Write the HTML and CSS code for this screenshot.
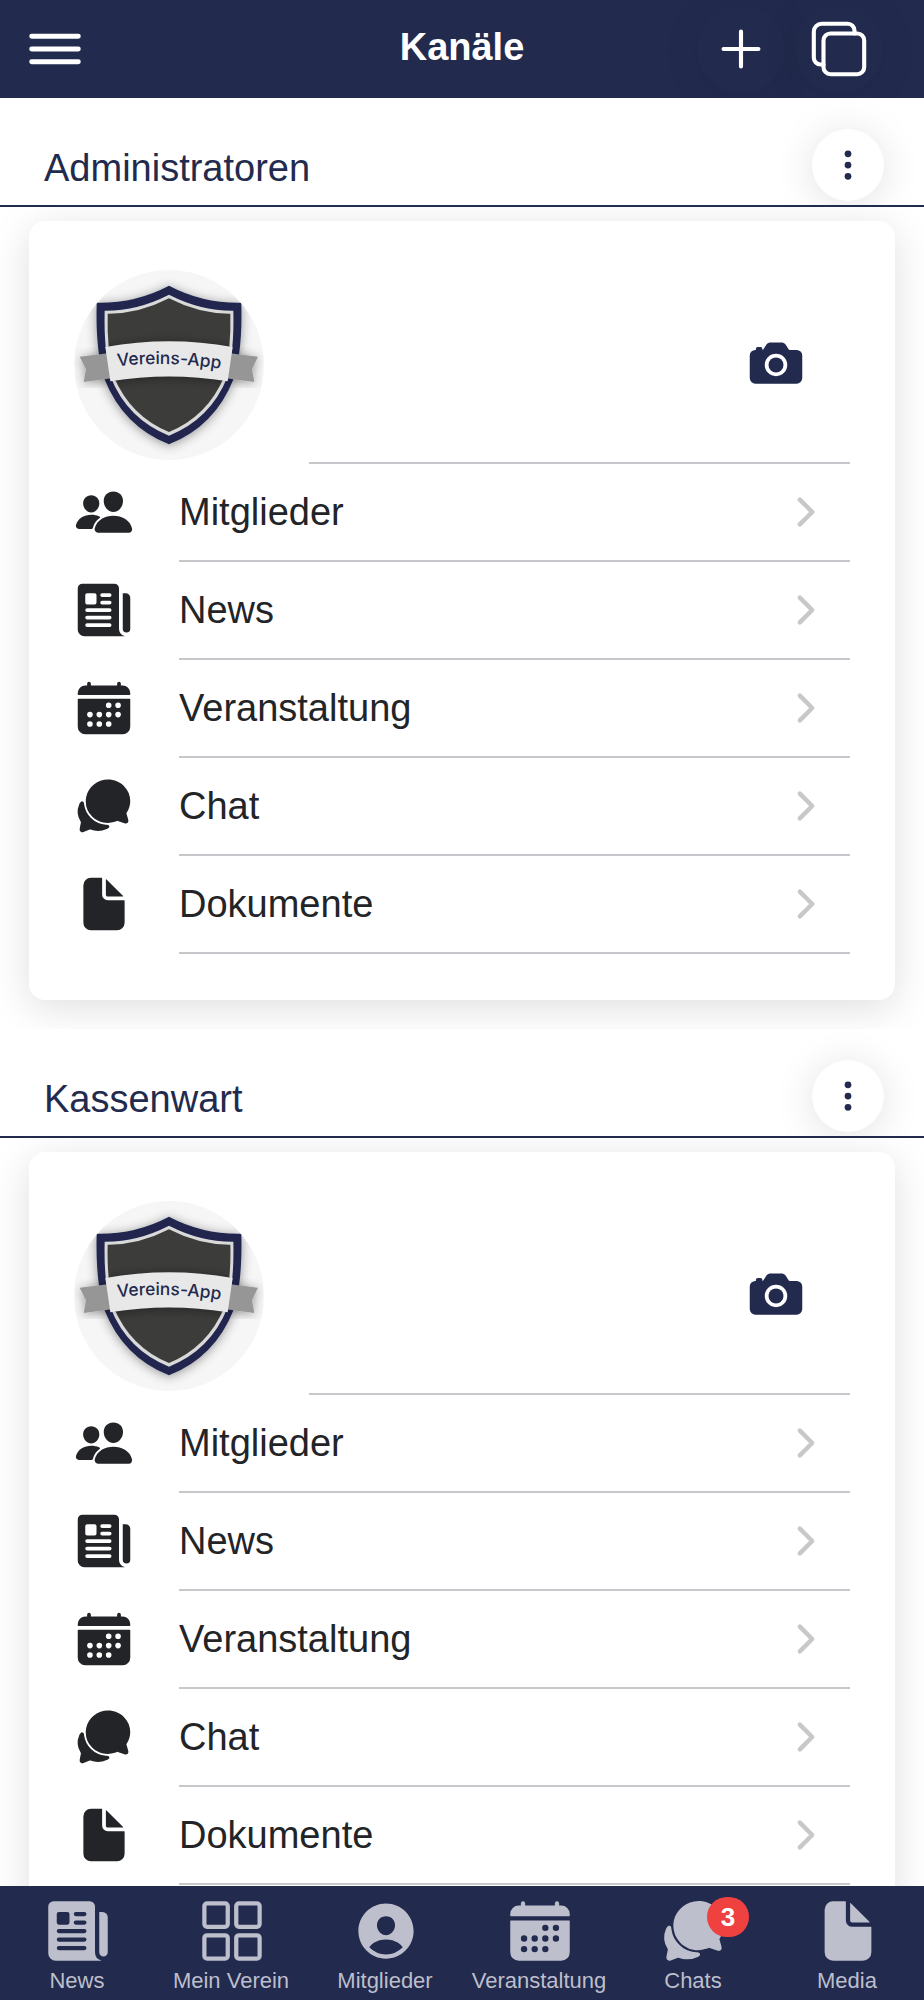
FILE: index.html
```html
<!DOCTYPE html>
<html lang="de">
<head>
  <meta charset="UTF-8" />
  <meta name="viewport" content="width=device-width, initial-scale=1.0"/>
  <title>Kanäle</title>
  <link rel="stylesheet" href="styles.css">
</head>
<body>
  <svg class="sprite" aria-hidden="true">
    <symbol id="i-people" viewBox="0 0 512 512">
      <path d="M336 256c-20.56 0-40.44-9.18-56-25.84-15.13-16.25-24.37-37.92-26-61-1.74-24.62 5.77-47.26 21.14-63.76S312 80 336 80c23.83 0 45.38 9.06 60.7 25.52 15.47 16.62 23 39.22 21.26 63.63-1.67 23.11-10.9 44.77-26 61C376.44 246.82 356.57 256 336 256zM467.83 432H204.18a27.71 27.71 0 01-22-10.67 30.22 30.22 0 01-5.26-25.79c8.42-33.81 29.28-61.85 60.32-81.08C264.79 297.4 299.86 288 336 288c36.85 0 71 9 98.71 26.05 31.11 19.13 52 47.33 60.38 81.55a30.27 30.27 0 01-5.32 25.78A27.68 27.68 0 01467.83 432zM147 260c-35.19 0-66.13-32.72-69-72.93-1.42-20.6 5-39.65 18-53.62 12.86-13.83 31-21.45 51-21.45s38 7.66 50.93 21.57c13.1 14.08 19.5 33.09 18 53.52-2.87 40.2-33.8 72.91-68.93 72.91zM212.66 291.45c-17.59-8.6-40.42-12.9-65.65-12.9-29.46 0-58.07 7.68-80.57 21.62-25.51 15.83-42.67 38.88-49.6 66.71a27.39 27.39 0 004.79 23.36A25.32 25.32 0 0041.72 400h111a8 8 0 007.87-6.57c.11-.63.25-1.26.41-1.88 8.48-34.06 28.35-62.84 57.71-83.82a8 8 0 00-.63-13.39c-1.57-.92-3.37-1.89-5.42-2.89z"/>
    </symbol>
    <symbol id="i-news" viewBox="0 0 512 512">
      <path d="M439.91 112h-23.82a.09.09 0 00-.09.09V416a32 32 0 0032 32 32 32 0 0032-32V152.09A40.09 40.09 0 00439.91 112z"/>
      <path fill-rule="evenodd" d="M384 416V72a40 40 0 00-40-40H72a40 40 0 00-40 40v352a56 56 0 0056 56h342.85a1.14 1.14 0 00.3-2.25A64.11 64.11 0 01384 416zM96 128a16 16 0 0116-16h64a16 16 0 0116 16v64a16 16 0 01-16 16h-64a16 16 0 01-16-16zM304 400H112a16 16 0 010-32h192a16 16 0 010 32zM304 336H112a16 16 0 010-32h192a16 16 0 010 32zM304 272H112a16 16 0 010-32h192a16 16 0 010 32zM304 208h-64a16 16 0 010-32h64a16 16 0 010 32zM304 144h-64a16 16 0 010-32h64a16 16 0 010 32z"/>
    </symbol>
    <symbol id="i-calendar" viewBox="0 0 512 512">
      <path d="M480 128a64 64 0 00-64-64h-16V48a16 16 0 00-32 0v16H144V48a16 16 0 00-32 0v16H96a64 64 0 00-64 64v12a4 4 0 004 4h440a4 4 0 004-4z"/>
      <path fill-rule="evenodd" d="M32 416a64 64 0 0064 64h320a64 64 0 0064-64V179a3 3 0 00-3-3H35a3 3 0 00-3 3zm344-208a24 24 0 11-24 24 24 24 0 0124-24zm0 80a24 24 0 11-24 24 24 24 0 0124-24zm-80-80a24 24 0 11-24 24 24 24 0 0124-24zm0 80a24 24 0 11-24 24 24 24 0 0124-24zm0 80a24 24 0 11-24 24 24 24 0 0124-24zm-80-80a24 24 0 11-24 24 24 24 0 0124-24zm0 80a24 24 0 11-24 24 24 24 0 0124-24zm-80-80a24 24 0 11-24 24 24 24 0 0124-24zm0 80a24 24 0 11-24 24 24 24 0 0124-24z"/>
    </symbol>
    <symbol id="i-chat" viewBox="0 0 512 512">
      <path d="M439.9 405.6a26.77 26.77 0 01-9.59-2l-56.78-20.13-.42-.17a9.88 9.88 0 00-3.91-.76 10.32 10.32 0 00-3.62.66c-1.38.52-13.81 5.19-26.85 8.77-7.07 1.94-31.68 8.27-51.43 8.27-50.48 0-97.68-19.4-132.89-54.63A183.38 183.38 0 01100.3 215.1a175.9 175.9 0 014.06-37.58c8.79-40.62 32.07-77.57 65.55-104A194.76 194.76 0 01290.3 30.5c52.21 0 100.86 20 137 56.18 34.16 34.27 52.88 79.33 52.73 126.87a177.86 177.86 0 01-30.3 99.15l-.19.28-.74 1c-.17.23-.34.45-.5.68l-.15.27a21.63 21.63 0 00-1.08 2.09l15.74 55.94a26.42 26.42 0 011.12 7.11 24 24 0 01-24.03 25.53z"/>
      <path d="M299.87 425.39a15.74 15.74 0 00-10.29-8.1c-5.78-1.53-12.52-1.27-17.67-1.65a201.78 201.78 0 01-128.82-58.75A199.21 199.21 0 0186.4 244.16C85 234.42 85 232 85 232a16 16 0 00-28-10.58s-7.88 8.58-11.6 17.19a162.09 162.09 0 0011 150.06C59 393 59 395 58.42 399.5c-2.73 14.11-7.51 39-10 51.91a24 24 0 008 22.92l.46.39A24.34 24.34 0 0072 480a23.42 23.42 0 009-1.79l53.51-20.65a8.05 8.05 0 015.72 0c21.07 7.84 43 12 63.78 12a176 176 0 0074.91-16.66c5.46-2.56 14-5.34 19-11.12a15 15 0 001.95-16.39z"/>
    </symbol>
    <symbol id="i-document" viewBox="0 0 512 512">
      <path d="M428 224H288a48 48 0 01-48-48V36a4 4 0 00-4-4h-92a64 64 0 00-64 64v320a64 64 0 0064 64h224a64 64 0 0064-64V228a4 4 0 00-4-4z"/>
      <path d="M419.22 188.59L275.41 44.78a2 2 0 00-3.41 1.41V176a16 16 0 0016 16h129.81a2 2 0 001.41-3.41z"/>
    </symbol>
    <symbol id="i-camera" viewBox="0 0 512 512">
      <circle cx="256" cy="272" r="64"/>
      <path fill-rule="evenodd" d="M432 144h-59c-3 0-6.72-1.94-9.62-5l-25.94-40.94a15.52 15.52 0 00-1.37-1.85C327.11 85.76 315 80 302 80h-92c-13 0-25.11 5.76-34.07 16.21a15.52 15.52 0 00-1.37 1.85l-25.94 41c-2.22 2.42-5.34 5-8.62 5v-8a16 16 0 00-16-16h-24a16 16 0 00-16 16v8h-4a48.05 48.05 0 00-48 48V384a48.05 48.05 0 0048 48h352a48.05 48.05 0 0048-48V192a48.05 48.05 0 00-48-48zM256 368a96 96 0 1196-96 96.11 96.11 0 01-96 96z"/>
    </symbol>
    <symbol id="i-person" viewBox="0 0 512 512">
      <path fill-rule="evenodd" d="M256 48C141.13 48 48 141.13 48 256s93.13 208 208 208 208-93.13 208-208S370.87 48 256 48zm-50.22 116.82C218.45 151.39 236.28 144 256 144s37.39 7.44 50.11 20.94c12.89 13.68 19.16 32.06 17.68 51.82C320.83 256 290.43 288 256 288s-64.89-32-67.79-71.25c-1.47-19.92 4.79-38.36 17.57-51.93zM256 432a175.49 175.49 0 01-126-53.22 122.91 122.91 0 0135.14-33.44C190.63 329 222.89 320 256 320s65.37 9 90.83 25.34A122.87 122.87 0 01382 378.78 175.45 175.45 0 01256 432z"/>
    </symbol>
    <symbol id="i-grid" viewBox="0 0 512 512">
      <g fill="none" stroke="currentColor" stroke-width="32">
        <rect x="48" y="48" width="176" height="176" rx="20"/>
        <rect x="288" y="48" width="176" height="176" rx="20"/>
        <rect x="48" y="288" width="176" height="176" rx="20"/>
        <rect x="288" y="288" width="176" height="176" rx="20"/>
      </g>
    </symbol>
    <symbol id="i-menu" viewBox="0 0 512 512">
      <path fill="none" stroke="currentColor" stroke-width="36" stroke-linecap="round" d="M80 160h352M80 256h352M80 352h352"/>
    </symbol>
    <symbol id="i-add" viewBox="0 0 512 512">
      <path fill="none" stroke="currentColor" stroke-width="34" stroke-linecap="round" d="M256 112v288M400 256H112"/>
    </symbol>
    <symbol id="i-copy" viewBox="0 0 512 512">
      <g fill="none" stroke="currentColor" stroke-width="34" stroke-linejoin="round">
        <rect x="128" y="128" width="336" height="336" rx="57"/>
        <path stroke-linecap="round" d="M383.5 128l.5-24a56.16 56.16 0 00-56-56H112a64.19 64.19 0 00-64 64v216a56.16 56.16 0 0056 56h24"/>
      </g>
    </symbol>
    <symbol id="i-dots" viewBox="0 0 512 512">
      <circle cx="256" cy="96" r="48"/>
      <circle cx="256" cy="256" r="48"/>
      <circle cx="256" cy="416" r="48"/>
    </symbol>
    <symbol id="i-chevron" viewBox="0 0 512 512">
      <path fill="none" stroke="currentColor" stroke-width="52" stroke-linecap="round" stroke-linejoin="round" d="M184 112l144 144-144 144"/>
    </symbol>
    <filter id="soft" x="-20%" y="-20%" width="140%" height="140%">
      <feDropShadow dx="0" dy="4" stdDeviation="16" flood-color="#000" flood-opacity="0.4"/>
    </filter>
    <clipPath id="shield-clip"><path d="M506 262Q597 310 691 309Q694 420 673 500Q625 618 506 668Q387 618 339 500Q318 420 321 309Q415 310 506 262Z"/></clipPath>
    <symbol id="logo" viewBox="222 180 568 570">
      <rect x="222" y="180" width="568" height="570" fill="#f6f6f6"/>
      <path filter="url(#soft)" fill="#20284f" d="M506 227Q606 280 723 278Q727 422 700 506Q644 648 506 703Q368 648 312 506Q285 422 289 278Q406 280 506 227Z"/>
      <path fill="#d9d9d9" d="M506 254Q602 303 699 302Q702 420 681 502Q630 628 506 677Q382 628 331 502Q310 420 313 302Q410 303 506 254Z"/>
      <path fill="#3c3c3a" d="M506 265Q597 312 690 311Q693 420 671 500Q623 617 506 666Q389 617 341 500Q319 420 322 311Q415 312 506 265Z"/>
      <path filter="url(#soft)" fill="#969696" d="M238 440L330 429L334 505L250 516L257 478Z"/>
      <path filter="url(#soft)" fill="#969696" d="M773 440L682 429L678 505L762 516L755 478Z"/>
      <g clip-path="url(#shield-clip)">
        <path filter="url(#soft)" d="M315 411Q506 376 697 411L682 514Q506 485 330 514Z"/>
      </g>
      <path fill="#e8e8e8" d="M315 411Q506 376 697 411L682 514Q506 485 330 514Z"/>
      <path id="banner" fill="none" d="M330 471Q506 449 682 480"/>
      <text class="logo-text" text-anchor="middle"><textPath href="#banner" startOffset="50%">Vereins-App</textPath></text>
    </symbol>
  </svg>

  <header class="topbar">
    <button class="menu-btn" aria-label="Menü"><svg><use href="#i-menu"/></svg></button>
    <h1>Kanäle</h1>
    <div class="actions">
      <button class="round-btn" aria-label="Neu"><svg><use href="#i-add"/></svg></button>
      <button class="round-btn" aria-label="Kopieren"><svg><use href="#i-copy"/></svg></button>
    </div>
  </header>

  <main class="content">
    <section class="channel">
      <div class="channel-head">
        <h2>Administratoren</h2>
        <button class="more-btn" aria-label="Mehr"><svg><use href="#i-dots"/></svg></button>
      </div>
      <div class="card-wrap">
        <div class="card">
          <div class="logo-row">
            <svg class="avatar"><use href="#logo"/></svg>
            <div class="logo-inner">
              <button class="camera-btn" aria-label="Bild ändern"><svg class="icon"><use href="#i-camera"/></svg></button>
            </div>
          </div>
          <a class="row" href="#"><svg class="icon"><use href="#i-people"/></svg><span class="row-inner"><span>Mitglieder</span><svg class="chevron"><use href="#i-chevron"/></svg></span></a>
          <a class="row" href="#"><svg class="icon"><use href="#i-news"/></svg><span class="row-inner"><span>News</span><svg class="chevron"><use href="#i-chevron"/></svg></span></a>
          <a class="row" href="#"><svg class="icon"><use href="#i-calendar"/></svg><span class="row-inner"><span>Veranstaltung</span><svg class="chevron"><use href="#i-chevron"/></svg></span></a>
          <a class="row" href="#"><svg class="icon"><use href="#i-chat"/></svg><span class="row-inner"><span>Chat</span><svg class="chevron"><use href="#i-chevron"/></svg></span></a>
          <a class="row" href="#"><svg class="icon"><use href="#i-document"/></svg><span class="row-inner"><span>Dokumente</span><svg class="chevron"><use href="#i-chevron"/></svg></span></a>
        </div>
      </div>
    </section>

    <section class="channel">
      <div class="channel-head">
        <h2>Kassenwart</h2>
        <button class="more-btn" aria-label="Mehr"><svg><use href="#i-dots"/></svg></button>
      </div>
      <div class="card-wrap">
        <div class="card">
          <div class="logo-row">
            <svg class="avatar"><use href="#logo"/></svg>
            <div class="logo-inner">
              <button class="camera-btn" aria-label="Bild ändern"><svg class="icon"><use href="#i-camera"/></svg></button>
            </div>
          </div>
          <a class="row" href="#"><svg class="icon"><use href="#i-people"/></svg><span class="row-inner"><span>Mitglieder</span><svg class="chevron"><use href="#i-chevron"/></svg></span></a>
          <a class="row" href="#"><svg class="icon"><use href="#i-news"/></svg><span class="row-inner"><span>News</span><svg class="chevron"><use href="#i-chevron"/></svg></span></a>
          <a class="row" href="#"><svg class="icon"><use href="#i-calendar"/></svg><span class="row-inner"><span>Veranstaltung</span><svg class="chevron"><use href="#i-chevron"/></svg></span></a>
          <a class="row" href="#"><svg class="icon"><use href="#i-chat"/></svg><span class="row-inner"><span>Chat</span><svg class="chevron"><use href="#i-chevron"/></svg></span></a>
          <a class="row" href="#"><svg class="icon"><use href="#i-document"/></svg><span class="row-inner"><span>Dokumente</span><svg class="chevron"><use href="#i-chevron"/></svg></span></a>
        </div>
      </div>
    </section>
  </main>

  <nav class="tabbar">
    <a href="#"><svg><use href="#i-news"/></svg><span>News</span></a>
    <a href="#"><svg><use href="#i-grid"/></svg><span>Mein Verein</span></a>
    <a href="#"><svg><use href="#i-person"/></svg><span>Mitglieder</span></a>
    <a href="#"><svg><use href="#i-calendar"/></svg><span>Veranstaltung</span></a>
    <a href="#"><svg><use href="#i-chat"/></svg><span>Chats</span><b class="badge">3</b></a>
    <a href="#"><svg><use href="#i-document"/></svg><span>Media</span></a>
  </nav>
</body>
</html>
```

FILE: styles.css
```css
* {
  box-sizing: border-box;
}
body {
  margin: 0;
  height: 100vh;
  display: flex;
  flex-direction: column;
  font-family: "Liberation Sans", Arial, sans-serif;
  font-size: 38px;
  background: #fff;
  color: #222428;
}
svg {
  display: block;
  flex: none;
  fill: currentColor;
}
button {
  padding: 0;
  border: none;
  background: none;
  color: inherit;
  cursor: pointer;
}
a {
  color: inherit;
  text-decoration: none;
}
.sprite {
  position: absolute;
  width: 0;
  height: 0;
}

/* header */
.topbar {
  flex: none;
  display: grid;
  grid-template-columns: 1fr auto 1fr;
  align-items: center;
  height: 98px;
  padding: 0 41px 0 21px;
  background: #222a4e;
  color: #fff;
  overflow: hidden;
}
.menu-btn {
  justify-self: start;
}
.menu-btn svg {
  width: 68px;
  height: 68px;
}
.topbar h1 {
  margin: 0;
  padding: 0 0 4px 20px;
  font-size: 38px;
}
.actions {
  display: flex;
  justify-content: flex-end;
  gap: 10px;
}
.round-btn {
  display: flex;
  align-items: center;
  justify-content: center;
  width: 88px;
  height: 88px;
  border-radius: 50%;
  box-shadow: 0 4px 40px rgba(0, 0, 0, 0.08);
}
.round-btn svg {
  width: 62px;
  height: 62px;
}

/* channels */
.content {
  flex: 1;
  min-height: 0;
  overflow-y: auto;
  scrollbar-width: none;
}
.channel-head {
  display: flex;
  align-items: center;
  justify-content: space-between;
  padding: 31px 40px 4px 44px;
  border-bottom: 2px solid #222a4e;
  color: #222a4e;
  overflow: hidden;
}
.channel-head h2 {
  margin: 0;
  padding-top: 6px;
  font-size: 38px;
  font-weight: normal;
}
.more-btn {
  display: flex;
  align-items: center;
  justify-content: center;
  width: 72px;
  height: 72px;
  border-radius: 50%;
  background: #fff;
  box-shadow: 0 4px 40px rgba(0, 0, 0, 0.12);
}
.more-btn svg {
  width: 36px;
  height: 36px;
}
.card-wrap {
  padding: 14px 29px 29px;
  overflow: hidden;
}
.card {
  padding: 45px 45px 46px;
  border-radius: 16px;
  background: #fff;
  box-shadow: 0 8px 40px rgba(0, 0, 0, 0.13);
}
.logo-row {
  display: flex;
  align-items: center;
  gap: 45px;
  height: 198px;
}
.avatar {
  width: 190px;
  height: 190px;
  border-radius: 50%;
}
.logo-text {
  font-family: Inter, sans-serif;
  font-size: 52px;
  font-weight: 500;
  fill: #222a4e;
}
.logo-inner {
  flex: 1;
  align-self: stretch;
  display: flex;
  align-items: center;
  justify-content: flex-end;
  padding: 0 44px 2px 0;
  border-bottom: 2px solid #c8c7cc;
}
.camera-btn {
  color: #222a4e;
}
.icon {
  width: 60px;
  height: 60px;
}
.row {
  display: flex;
  align-items: center;
  gap: 45px;
}
.row .icon {
  margin-bottom: 2px;
}
.row-inner {
  flex: 1;
  display: flex;
  align-items: center;
  justify-content: space-between;
  height: 98px;
  padding-right: 22px;
  border-bottom: 2px solid #c8c7cc;
}
.chevron {
  width: 44px;
  height: 44px;
  color: #c8c8c8;
}

/* bottom tabs */
.tabbar {
  flex: none;
  display: grid;
  grid-template-columns: repeat(6, 1fr);
  padding: 11px 0 6px;
  background: #222a4e;
  color: #bdbfcc;
  font-size: 22px;
  line-height: 26px;
}
.tabbar a {
  position: relative;
  display: flex;
  flex-direction: column;
  align-items: center;
  gap: 3px;
}
.tabbar svg {
  width: 68px;
  height: 68px;
  margin-left: 2px;
}
.badge {
  position: absolute;
  top: 0;
  left: calc(50% + 14px);
  width: 42px;
  border-radius: 20px;
  background: #f04141;
  color: #fff;
  font-size: 26px;
  line-height: 40px;
  text-align: center;
}
```
